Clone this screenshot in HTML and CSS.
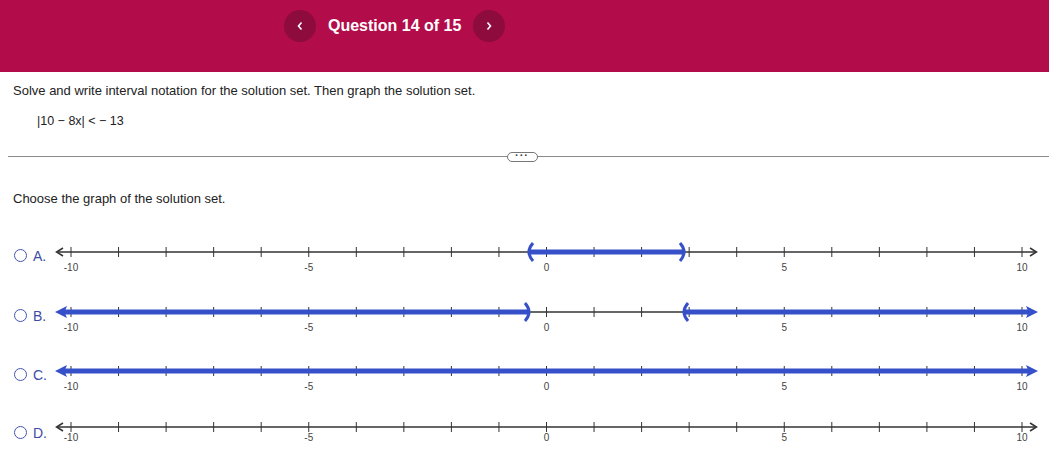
FILE: index.html
```html
<!DOCTYPE html>
<html>
<head>
<meta charset="utf-8">
<link rel="stylesheet" href="styles.css">
</head>
<body>
<header class="topbar">
  <nav class="qnav">
    <button class="navbtn" aria-label="Previous"><svg width="8" height="10" viewBox="0 0 8 10"><path d="M5.5 1.5 L2.5 5 L5.5 8.5" fill="none" stroke="#fff" stroke-width="1.6"/></svg></button>
    <span class="qtitle">Question 14 of 15</span>
    <button class="navbtn" aria-label="Next"><svg width="8" height="10" viewBox="0 0 8 10"><path d="M2.5 1.5 L5.5 5 L2.5 8.5" fill="none" stroke="#fff" stroke-width="1.6"/></svg></button>
  </nav>
</header>
<main class="content">
  <p class="prompt">Solve and write interval notation for the solution set. Then graph the solution set.</p>
  <p class="equation">|10 − 8x| &lt; − 13</p>
  <div class="divider"><span class="pill">···</span></div>
  <p class="prompt choose">Choose the graph of the solution set.</p>

  <div class="option opt-a">
    <span class="radio"></span><span class="label">A.</span>
    <svg class="nl" width="999" height="40" viewBox="0 0 999 40">
      <use href="#axis"/>
      <use href="#chevL"/>
      <use href="#chevR"/>
      <use href="#labels"/>
      <line x1="479" y1="14" x2="634" y2="14" class="blue"/>
      <path d="M483 5 Q475 14 483 23" class="paren"/>
      <path d="M630 5 Q638 14 630 23" class="paren"/>
    </svg>
  </div>
  <div class="option opt-b">
    <span class="radio"></span><span class="label">B.</span>
    <svg class="nl" width="999" height="40" viewBox="0 0 999 40">
      <use href="#axis"/>
      <use href="#labels"/>
      <line x1="14" y1="14" x2="479" y2="14" class="blue"/>
      <path d="M5 14 L17 8 L14.5 14 L17 20 Z" class="bluehead"/>
      <path d="M475 5 Q483 14 475 23" class="paren"/>
      <line x1="634" y1="14" x2="980" y2="14" class="blue"/>
      <path d="M988 14 L976 8 L978.5 14 L976 20 Z" class="bluehead"/>
      <path d="M638 5 Q630 14 638 23" class="paren"/>
    </svg>
  </div>
  <div class="option opt-c">
    <span class="radio"></span><span class="label">C.</span>
    <svg class="nl" width="999" height="40" viewBox="0 0 999 40">
      <use href="#axis"/>
      <use href="#labels"/>
      <line x1="14" y1="14" x2="980" y2="14" class="blue"/>
      <path d="M5 14 L17 8 L14.5 14 L17 20 Z" class="bluehead"/>
      <path d="M988 14 L976 8 L978.5 14 L976 20 Z" class="bluehead"/>
    </svg>
  </div>
  <div class="option opt-d">
    <span class="radio"></span><span class="label">D.</span>
    <svg class="nl" width="999" height="40" viewBox="0 0 999 40">
      <use href="#axis"/>
      <use href="#chevL"/>
      <use href="#chevR"/>
      <use href="#labels" y="-5"/>
    </svg>
  </div>
</main>

<svg width="0" height="0" class="defs">
  <defs>
    <path id="chevL" d="M13 10 L6.5 14 L13 18" class="axishead"/>
    <path id="chevR" d="M980 10 L986.5 14 L980 18" class="axishead"/>
    <g id="axis">
      <line x1="7" y1="14" x2="986" y2="14" class="axisline"/>
      <g class="ticks">
        <line x1="21" y1="9" x2="21" y2="19"/>
        <line x1="68.55" y1="9" x2="68.55" y2="19"/>
        <line x1="116.1" y1="9" x2="116.1" y2="19"/>
        <line x1="163.65" y1="9" x2="163.65" y2="19"/>
        <line x1="211.2" y1="9" x2="211.2" y2="19"/>
        <line x1="258.75" y1="9" x2="258.75" y2="19"/>
        <line x1="306.3" y1="9" x2="306.3" y2="19"/>
        <line x1="353.85" y1="9" x2="353.85" y2="19"/>
        <line x1="401.4" y1="9" x2="401.4" y2="19"/>
        <line x1="448.95" y1="9" x2="448.95" y2="19"/>
        <line x1="496.5" y1="9" x2="496.5" y2="19"/>
        <line x1="544.05" y1="9" x2="544.05" y2="19"/>
        <line x1="591.6" y1="9" x2="591.6" y2="19"/>
        <line x1="639.15" y1="9" x2="639.15" y2="19"/>
        <line x1="686.7" y1="9" x2="686.7" y2="19"/>
        <line x1="734.25" y1="9" x2="734.25" y2="19"/>
        <line x1="781.8" y1="9" x2="781.8" y2="19"/>
        <line x1="829.35" y1="9" x2="829.35" y2="19"/>
        <line x1="876.9" y1="9" x2="876.9" y2="19"/>
        <line x1="924.45" y1="9" x2="924.45" y2="19"/>
        <line x1="972" y1="9" x2="972" y2="19"/>
      </g>
    </g>
    <g id="labels" class="ticklabels">
      <text x="21" y="33">-10</text>
      <text x="258.75" y="33">-5</text>
      <text x="496.5" y="33">0</text>
      <text x="734.25" y="33">5</text>
      <text x="972" y="33">10</text>
    </g>
  </defs>
</svg>
</body>
</html>
```
FILE: styles.css
```css
* { box-sizing: border-box; }
body {
  margin: 0;
  background: #fff;
  font-family: "Liberation Sans", Arial, sans-serif;
  color: #222;
}
.topbar {
  height: 72px;
  background: #b20c4b;
}
.qnav {
  display: flex;
  align-items: center;
  padding-left: 284px;
  padding-top: 10px;
}
.navbtn {
  width: 32px;
  height: 32px;
  border-radius: 50%;
  border: none;
  background: #8e0b3d;
  display: flex;
  align-items: center;
  justify-content: center;
  padding: 0;
}
.qtitle {
  color: #fff;
  font-weight: bold;
  font-size: 16px;
  margin: 0 8px 0 12px;
  width: 137px;
}
.content { padding: 0; }
.prompt {
  margin: 11px 0 0 13px;
  font-size: 13px;
  line-height: 16px;
}
.equation {
  margin: 14px 0 0 37px;
  font-size: 12.5px;
  line-height: 16px;
}
.divider {
  margin: 22px 0 0 8px;
  height: 12px;
  position: relative;
  display: flex;
  align-items: center;
  justify-content: center;
  padding-right: 20px;
}
.divider::before {
  content: "";
  position: absolute;
  left: 0;
  right: 0;
  top: 5px;
  border-top: 1px solid #8a8a8a;
}
.pill {
  position: relative;
  width: 31px;
  height: 10px;
  border: 1px solid #777;
  border-radius: 5px;
  background: #fff;
  font-size: 11px;
  font-weight: bold;
  line-height: 5px;
  text-align: center;
  color: #444;
  letter-spacing: 1px;
  margin-left: 7px;
}
.choose { margin-top: 28px; }
.option {
  display: flex;
  align-items: flex-start;
}
.opt-a { margin-top: 31px; height: 60px; }
.opt-b { height: 59px; }
.opt-c { height: 56px; }
.opt-d { height: 40px; }
.radio {
  width: 13px;
  height: 13px;
  border: 1.4px solid #4656b0;
  border-radius: 50%;
  margin: 11px 0 0 14px;
  flex: none;
}
.label {
  color: #3c4ba6;
  font-size: 14px;
  line-height: 16px;
  margin: 10px 0 0 6px;
  width: 17px;
}
.opt-d .label { margin-top: 12px; }
.opt-d .radio { margin-top: 13px; }
.nl { display: block; flex: none; overflow: visible; }
.defs { position: absolute; }
.axisline { stroke: #333; stroke-width: 1.3; }
.axishead { fill: none; stroke: #333; stroke-width: 1.5; }
.ticks line { stroke: #333; stroke-width: 1; }
.ticklabels text {
  font-family: "Liberation Sans", Arial, sans-serif;
  font-size: 10px;
  fill: #444;
  text-anchor: middle;
}
.blue { stroke: #3550c8; stroke-width: 5; }
.bluehead { fill: #3550c8; }
.paren { fill: none; stroke: #3550c8; stroke-width: 3; }
```
